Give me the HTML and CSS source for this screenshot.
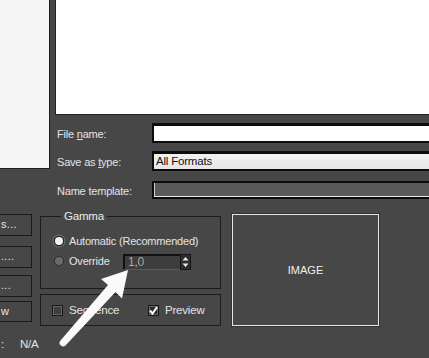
FILE: index.html
```html
<!DOCTYPE html>
<html lang="en">
<head>
    <meta charset="UTF-8">
    <title>Save Image</title>
    <link rel="stylesheet" href="styles.css">
</head>
<body>
<div class="dialog">
    <div class="upper">
        <div class="places"></div>
        <div class="main">
            <div class="file-list"></div>
            <div class="fields">
                <div class="field">
                    <span class="label">File <u>n</u>ame:</span>
                    <div class="box box-white"></div>
                </div>
                <div class="field">
                    <span class="label">Save as <u>t</u>ype:</span>
                    <div class="box box-select">All Formats</div>
                </div>
                <div class="field field-short">
                    <span class="label">Name template:</span>
                    <div class="box box-disabled"></div>
                </div>
            </div>
        </div>
    </div>

    <div class="lower">
        <div class="side-buttons">
            <div class="btn b1">s...</div>
            <div class="btn b2">....</div>
            <div class="btn b3">...</div>
            <div class="btn b4">w</div>
        </div>
        <div class="options">
            <fieldset class="group gamma">
                <legend>Gamma</legend>
                <div class="opt">
                    <span class="radio checked"></span>
                    <span>Automatic (Recommended)</span>
                </div>
                <div class="opt">
                    <span class="radio"></span>
                    <span class="opt-name">Override</span>
                    <div class="spinner">
                        <span class="spin-value">1,0</span>
                        <span class="spin-arrows">
                            <svg width="7" height="12" viewBox="0 0 7 12"><path d="M3.5 1 L6.5 4.5 H0.5 Z M3.5 11 L6.5 7.5 H0.5 Z" fill="#e8e8e8"/></svg>
                        </span>
                    </div>
                </div>
            </fieldset>
            <div class="group checks">
                <label class="check-item first"><span class="check"></span>Sequence</label>
                <label class="check-item"><span class="check on">
                    <svg width="9" height="9" viewBox="0 0 9 9"><path d="M1 4.5 L3.5 7.5 L8 1.2" stroke="#fff" stroke-width="2" fill="none"/></svg>
                </span>Preview</label>
            </div>
        </div>
        <div class="image-box">IMAGE</div>
    </div>

    <div class="info">
        <span class="info-key">:</span>
        <span>N/A</span>
    </div>

    <svg class="pointer" width="429" height="358" viewBox="0 0 429 358">
        <path d="M128 270 L122 298.5 L115.5 292 L65.5 345.5 Q62 348 59.5 344 Q59 342 60.5 340.5 L108 285 L101 279 Z" fill="#fafafa"/>
    </svg>
</div>
</body>
</html>
```

FILE: styles.css
```css
*{
    box-sizing: border-box;
    margin: 0;
    padding: 0;
}
body{
    background: #474747;
    font-family: "Liberation Sans", Arial, sans-serif;
    font-size: 11px;
    letter-spacing: -0.2px;
    color: #e4e4e4;
    overflow: hidden;
}
.dialog{
    position: relative;
    width: 429px;
    height: 358px;
}
.upper{
    display: grid;
    grid-template-columns: 50px 1fr;
    column-gap: 5px;
    align-items: start;
}
.places{
    height: 169px;
    background: #f5f5f5;
    border-right: 1px solid #1e1e1e;
    border-bottom: 1px solid #1e1e1e;
}
.main{
    overflow: hidden;
}
.file-list{
    height: 115px;
    background: #fff;
    border: 1px solid #222;
    border-top: none;
    border-right: none;
}
.fields{
    display: flex;
    flex-direction: column;
    gap: 8px;
    margin-top: 8px;
}
.field{
    display: flex;
    align-items: center;
    height: 20px;
}
.field-short{
    height: 18px;
    margin-top: 2px;
}
.label{
    width: 97px;
    flex: none;
    padding-left: 2px;
    padding-top: 2px;
}
.label u{
    text-decoration-thickness: 1px;
    text-underline-offset: 1px;
}
.box{
    flex: none;
    width: 290px;
    height: 100%;
    border: 2px solid #0c0c0c;
    border-top-width: 3px;
    line-height: 15px;
    padding-left: 2px;
    color: #111;
}
.box-white{
    background: #fff;
}
.box-select{
    background: linear-gradient(#f2f2f2, #e6e6e6);
    font-size: 11.5px;
}
.box-disabled{
    background: #595959;
    border-top-width: 2px;
    box-shadow: inset -1px -1px 0 #e8e8e8, inset 1px 0 0 #cfcfcf;
}

.lower{
    display: flex;
    align-items: flex-start;
    margin-top: 15px;
}
.side-buttons{
    width: 38px;
    margin-left: -6px;
    display: flex;
    flex-direction: column;
}
.btn{
    height: 22px;
    border: 1px solid #1a1a1a;
    padding-left: 6px;
    line-height: 19px;
    letter-spacing: 0.3px;
}
.b2{ margin-top: 10px; }
.b3{ margin-top: 7px; }
.b4{ margin-top: 4px; height: 21px; }

.options{
    width: 181px;
    margin-left: 8px;
    margin-top: -4px;
    display: flex;
    flex-direction: column;
    gap: 5px;
}
.group{
    border: 1px solid #1c1c1c;
    min-width: 0;
}
.gamma{
    height: 79px;
    padding: 12px 0 0 14px;
    display: flex;
    flex-direction: column;
    gap: 6px;
}
.gamma legend{
    padding: 0 3px;
    margin-left: 6px;
    line-height: 12px;
    font-size: 11.5px;
    color: #ececec;
}
.opt{
    display: flex;
    align-items: center;
    height: 14px;
}
.opt-name{
    width: 54px;
}
.radio{
    width: 8px;
    height: 8px;
    border-radius: 50%;
    background: #6a6a6a;
    box-shadow: 0 0 0 1px #2e2e2e;
    margin-right: 6px;
    flex: none;
}
.radio.checked{
    background: #f2f2f2;
    box-shadow: 0 0 0 1.5px #2a2a2a, 0 0 0 2.5px #777;
}
.spinner{
    display: flex;
    height: 16px;
    margin-top: 2px;
}
.spin-value{
    width: 57px;
    background: #3d3d3d;
    border-top: 2px solid #111;
    border-left: 2px solid #111;
    border-bottom: 1px solid #5a5a5a;
    color: #a8a8a8;
    padding-left: 3px;
    line-height: 13px;
    font-size: 12px;
}
.spin-arrows{
    width: 11px;
    background: #2e2e2e;
    border: 1px solid #151515;
    display: flex;
    align-items: center;
    justify-content: center;
}
.checks{
    height: 32px;
    display: flex;
    align-items: center;
    padding-left: 11px;
}
.check-item{
    display: flex;
    align-items: center;
    font-size: 11.5px;
}
.check-item.first{
    width: 96px;
}
.check{
    width: 11px;
    height: 11px;
    border: 1px solid #1a1a1a;
    box-shadow: inset 0 0 0 1px #666;
    background: #3e3e3e;
    margin-right: 6px;
    display: flex;
    align-items: center;
    justify-content: center;
}
.check.on{
    background: #2c2c2c;
}

.image-box{
    width: 147px;
    height: 112px;
    margin-left: 11px;
    border: 1.5px solid #e6e6e6;
    box-shadow: 0 0 0 1px #333;
    display: flex;
    align-items: center;
    justify-content: center;
    color: #f0f0f0;
    letter-spacing: 0;
}

.info{
    display: flex;
    margin-top: 11px;
    line-height: 14px;
    font-size: 11.5px;
}
.info-key{
    width: 20px;
    padding-left: 1px;
}

.pointer{
    position: absolute;
    left: 0;
    top: 0;
    pointer-events: none;
}
```
